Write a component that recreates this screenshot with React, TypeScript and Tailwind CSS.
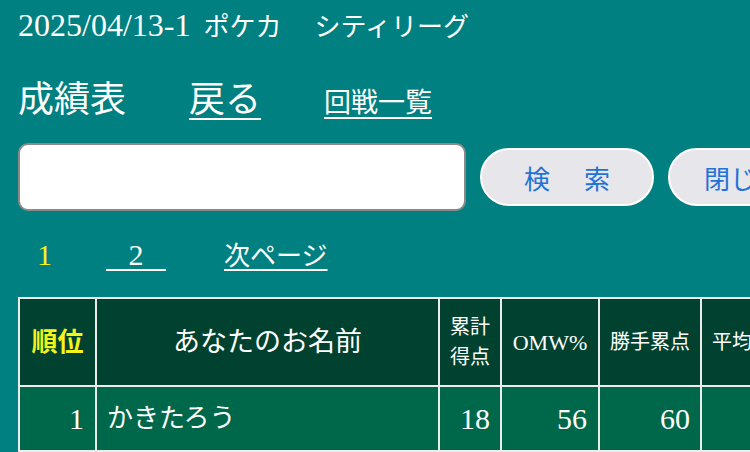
import React from "react"

const serif = "font-['Liberation_Serif','Noto_Sans_CJK_JP',serif]"

const rows = [
  { rank: 1, name: "かきたろう", total: 18, omw: 56, pts: 60, avg: "" },
  { rank: 2, name: "", total: "", omw: "", pts: "", avg: "" },
]

export default function App() {
  return (
    <div className={`w-[750px] h-[452px] overflow-hidden bg-[#008080] text-white ${serif}`}>
      <div className="pl-[18px] pt-[10px] leading-[30px] text-[26px] whitespace-nowrap">
        <span className="text-[32px] mr-[13px]">2025/04/13-1</span>
        <span>ポケカ</span>
        <span className="ml-[33px]">シティリーグ</span>
      </div>

      <div className="flex items-baseline pl-[18px] mt-[39px] leading-[36px] whitespace-nowrap">
        <span className="text-[36px]">成績表</span>
        <a href="#" className="text-[36px] ml-[63px] underline decoration-2 underline-offset-[6px]">戻る</a>
        <a href="#" className="text-[27px] ml-[63px] underline decoration-2 underline-offset-[5px]">回戦一覧</a>
      </div>

      <div className="flex items-center pl-[18px] mt-[22px] gap-[14px]">
        <input
          type="text"
          className="w-[448px] h-[68px] shrink-0 rounded-[10px] border-2 border-[#8a8a8a] bg-white px-3 text-black outline-none"
        />
        <button className="flex h-[58px] w-[174px] shrink-0 items-center justify-center gap-[34px] rounded-full border-2 border-white bg-[#e6e6eb] text-[26px] text-[#1f72d6] font-['Noto_Sans_CJK_JP',sans-serif]">
          <span>検</span>
          <span>索</span>
        </button>
        <button className="flex h-[58px] w-[174px] shrink-0 items-center justify-start pl-[34px] rounded-full border-2 border-white bg-[#e6e6eb] text-[26px] text-[#1f72d6] font-['Noto_Sans_CJK_JP',sans-serif]">
          閉じる
        </button>
      </div>

      <div className="flex items-baseline mt-[29px] leading-[30px] text-[26px] whitespace-nowrap">
        <span className="ml-[37px] text-[30px] text-[#f4f41c]">1</span>
        <a href="#" className="ml-[54px] text-[30px] underline decoration-2 underline-offset-[4px]">
          {"\u00a0\u00a0\u00a02\u00a0\u00a0\u00a0"}
        </a>
        <a href="#" className="ml-[58px] underline decoration-2 underline-offset-[4px]">次ページ</a>
      </div>

      <table className="ml-[18px] mt-[25px] table-fixed border-collapse border-2 border-[#ececec] w-[886px]">
        <thead>
          <tr className="h-[88px] bg-[#00422f]">
            <th className="w-[77px] border-2 border-[#ececec] text-[26px] font-bold text-[#f4f41c]">順位</th>
            <th className="w-[343px] border-2 border-[#ececec] text-[27px] font-normal">あなたのお名前</th>
            <th className="w-[62px] border-2 border-[#ececec] text-[20px] font-normal leading-[30px]">
              累計<br />得点
            </th>
            <th className="w-[98px] border-2 border-[#ececec] text-[22px] font-normal">OMW%</th>
            <th className="w-[102px] border-2 border-[#ececec] text-[20px] font-normal">勝手累点</th>
            <th className="w-[102px] border-2 border-[#ececec] text-[20px] font-normal whitespace-nowrap">平均得点</th>
            <th className="w-[102px] border-2 border-[#ececec] text-[20px] font-normal">勝率</th>
          </tr>
        </thead>
        <tbody>
          {rows.map((r) => (
            <tr key={r.rank} className="h-[65px] bg-[#00684a]">
              <td className="border-2 border-[#ececec] pr-[11px] text-right text-[30px]">{r.rank}</td>
              <td className="border-2 border-[#ececec] pl-[10px] text-left text-[26px]">{r.name}</td>
              <td className="border-2 border-[#ececec] pr-[10px] text-right text-[30px]">{r.total}</td>
              <td className="border-2 border-[#ececec] pr-[11px] text-right text-[30px]">{r.omw}</td>
              <td className="border-2 border-[#ececec] pr-[10px] text-right text-[30px]">{r.pts}</td>
              <td className="border-2 border-[#ececec] pr-[10px] text-right text-[30px]">{r.avg}</td>
              <td className="border-2 border-[#ececec] pr-[10px] text-right text-[30px]"></td>
            </tr>
          ))}
        </tbody>
      </table>
    </div>
  )
}
